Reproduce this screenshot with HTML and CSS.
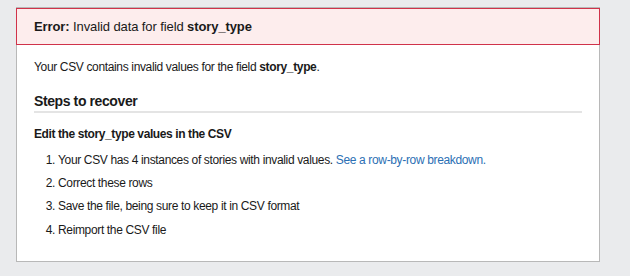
FILE: index.html
```html
<!DOCTYPE html>
<html>
<head>
<meta charset="utf-8">
<link rel="stylesheet" href="styles.css">
</head>
<body>
<div class="card">
  <div class="alert"><b>Error:</b> Invalid data for field <b>story_type</b></div>
  <div class="body">
    <p class="intro">Your CSV contains invalid values for the field <b>story_type</b>.</p>
    <h2 class="steps">Steps to recover</h2>
    <h3 class="sub">Edit the story_type values in the CSV</h3>
    <ol class="list">
      <li>Your CSV has 4 instances of stories with invalid values. <a href="#">See a row-by-row breakdown.</a></li>
      <li>Correct these rows</li>
      <li>Save the file, being sure to keep it in CSV format</li>
      <li>Reimport the CSV file</li>
    </ol>
  </div>
</div>
</body>
</html>
```
FILE: styles.css
```css
html, body { margin: 0; padding: 0; }
body {
  background: #eaebed;
  font-family: "Liberation Sans", Arial, sans-serif;
  color: #1a1a1a;
  padding: 7px 30px 0 16px;
  height: 276px;
  box-sizing: border-box;
}
.card {
  background: #fff;
  border: 1px solid #b8b8b8;
  width: 584px;
  box-sizing: border-box;
  height: 255px;
}
.alert {
  background: #fdeded;
  border: 1px solid #d0324a;
  margin: 0 -1px;
  height: 37px;
  box-sizing: border-box;
  padding: 10px 17px 0;
  font-size: 13px;
  line-height: 16px;
  letter-spacing: -0.1px;
}
.body { padding: 0 17px; }
.intro {
  margin: 14px 0 0;
  font-size: 12px;
  line-height: 16px;
  letter-spacing: -0.35px;
}
.steps {
  margin: 17px 0 0;
  font-size: 14px;
  line-height: 18px;
  letter-spacing: -0.4px;
  padding-bottom: 1px;
  border-bottom: 2px solid #e4e4e4;
}
.sub {
  margin: 13px 0 0;
  font-size: 12px;
  line-height: 16px;
  letter-spacing: -0.4px;
}
.list {
  margin: 10px 0 0;
  padding-left: 24px;
  font-size: 12px;
  line-height: 16px;
  letter-spacing: -0.35px;
}
.list li { margin-bottom: 7.2px; }
.list a { color: #2b6fb4; text-decoration: none; }
```
